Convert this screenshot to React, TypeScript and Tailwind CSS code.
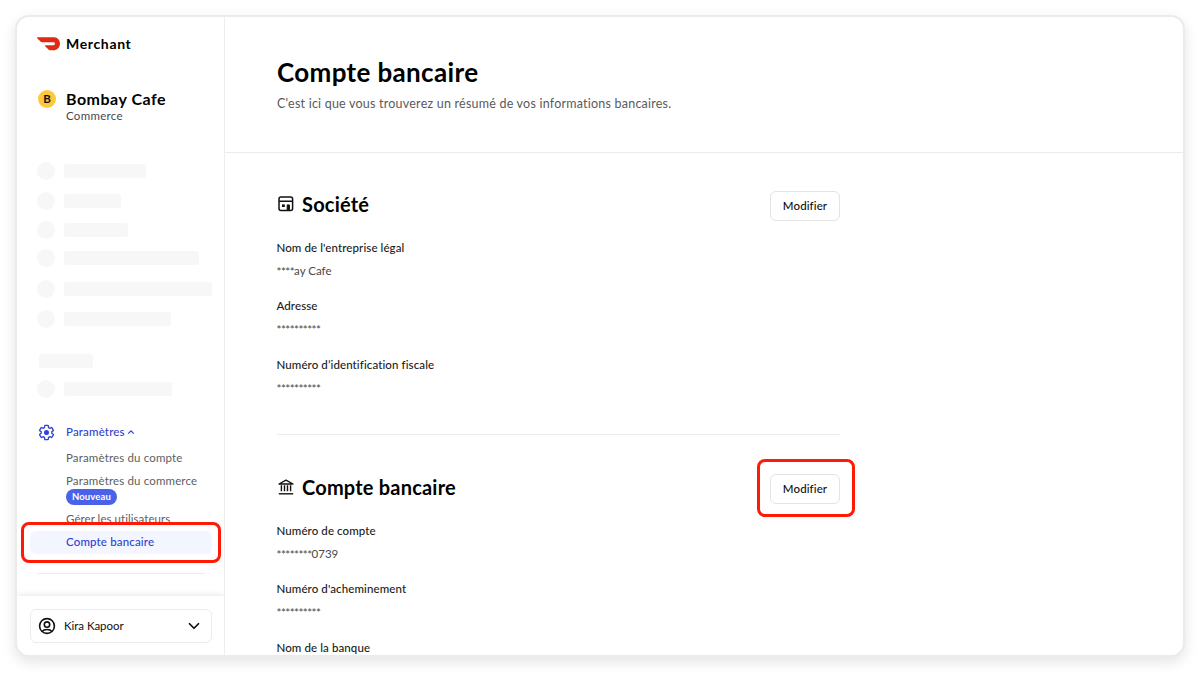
import { ChevronDown } from 'lucide-react';
import clsx from 'clsx';

const skeletonRows = [
  { width: 'w-[82px]', gap: 'mb-3' },
  { width: 'w-[57px]', gap: 'mb-[11px]' },
  { width: 'w-16', gap: 'mb-[10px]' },
  { width: 'w-[135px]', gap: 'mb-[13px]' },
  { width: 'w-[148px]', gap: 'mb-3' },
  { width: 'w-[107px]', gap: 'mb-0' },
];

interface Field {
  label: string;
  mask?: string;
  value?: string;
}

const companyFields: Field[] = [
  { label: "Nom de l'entreprise légal", mask: '****', value: 'ay Cafe' },
  { label: 'Adresse', mask: '**********' },
  { label: 'Numéro d’identification fiscale', mask: '**********' },
];

const bankFields: Field[] = [
  { label: 'Numéro de compte', mask: '********', value: '0739' },
  { label: "Numéro d'acheminement", mask: '**********' },
  { label: 'Nom de la banque' },
];

function DashLogo() {
  return (
    <svg viewBox="0 5 24 14" className="w-[23px] h-[13.4px]" fill="#e02a12">
      <path d="M23.071 8.409a6.09 6.09 0 0 0-5.396-3.228H.584A.589.589 0 0 0 .17 6.184L3.894 9.93a1.752 1.752 0 0 0 1.242.516h12.049a1.554 1.554 0 1 1 .031 3.108H8.91a.589.589 0 0 0-.415 1.003l3.725 3.747a1.75 1.75 0 0 0 1.242.516h3.757c4.887 0 8.584-5.225 5.852-10.413" />
    </svg>
  );
}

function GearIcon() {
  return (
    <svg viewBox="0 0 24 24" className="w-[17px] h-[17px]" fill="none" stroke="currentColor" strokeWidth="1.9" strokeLinejoin="round">
      <path d="M19.43 12.98c.04-.32.07-.64.07-.98 0-.34-.03-.66-.07-.98l2.11-1.65c.19-.15.24-.42.12-.64l-2-3.46a.5.5 0 0 0-.61-.22l-2.49 1c-.52-.4-1.08-.73-1.69-.98l-.38-2.65A.488.488 0 0 0 14 2h-4c-.25 0-.46.18-.49.42l-.38 2.65c-.61.25-1.17.59-1.69.98l-2.49-1a.5.5 0 0 0-.61.22l-2 3.46c-.13.22-.07.49.12.64l2.11 1.65c-.04.32-.07.65-.07.98 0 .33.03.66.07.98l-2.11 1.65c-.19.15-.24.42-.12.64l2 3.46a.5.5 0 0 0 .61.22l2.49-1c.52.4 1.08.73 1.69.98l.38 2.65c.03.24.24.42.49.42h4c.25 0 .46-.18.49-.42l.38-2.65c.61-.25 1.17-.59 1.69-.98l2.49 1a.5.5 0 0 0 .61-.22l2-3.46c.12-.22.07-.49-.12-.64z" />
      <circle cx="12" cy="12" r="2.6" fill="currentColor" />
    </svg>
  );
}

function StoreIcon() {
  return (
    <svg viewBox="0 0 16 16" className="w-4 h-4 ml-[1px]" fill="none" stroke="#111" strokeWidth="1.5">
      <rect x="1" y="1" width="13.6" height="13.6" rx="2" />
      <path d="M1 5.2h13.6" />
      <path d="M9.2 14.5V8.9h2.2v5.6z" fill="#111" strokeWidth="1" />
      <rect x="4" y="8.4" width="2.8" height="2.6" fill="#111" stroke="none" />
    </svg>
  );
}

function BankIcon() {
  return (
    <svg viewBox="0 0 16 16" className="w-4 h-4 ml-[1px]" fill="none" stroke="#111" strokeWidth="1.4">
      <path d="M1 5 8 1.2 15 5z" strokeLinejoin="round" />
      <path d="M3.4 6.3v6M6.5 6.3v6M9.5 6.3v6M12.6 6.3v6" />
      <path d="M.8 14.8h14.4" />
    </svg>
  );
}

function UserIcon() {
  return (
    <svg viewBox="0 0 18 18" className="w-[18px] h-[18px]" fill="none" stroke="#111" strokeWidth="1.6">
      <circle cx="9" cy="9" r="7.4" />
      <circle cx="9" cy="7.6" r="2.7" />
      <path d="M4.2 14.4c1-1.4 2.7-1.9 4.8-1.9s3.8.5 4.8 1.9" />
    </svg>
  );
}

function EditButton({ highlighted }: { highlighted?: boolean }) {
  return (
    <div className="relative">
      <button className="block w-[70px] h-[30px] rounded-md border border-[#e3e3e3] bg-white text-[11.5px] font-medium tracking-[0.1px] text-[#111]">
        Modifier
      </button>
      {highlighted && (
        <div className="absolute -left-[13px] -top-[15px] w-[98px] h-[58px] rounded-lg border-[3px] border-[#ff1a05] pointer-events-none" />
      )}
    </div>
  );
}

function FieldList({ fields }: { fields: Field[] }) {
  return (
    <dl className="mt-[19px] -ml-[0.5px] flex flex-col gap-[19px] text-[11.5px]">
      {fields.map((field) => (
        <div key={field.label} className="h-[39.4px]">
          <dt className="h-4 leading-4 font-medium tracking-[0.1px] text-[#1b1b1b]">{field.label}</dt>
          <dd className="flex mt-[7px] h-4 leading-4 text-[#494949]">
            <span className="pt-[1px] tracking-[-0.5px]">{field.mask}</span>
            <span>{field.value}</span>
          </dd>
        </div>
      ))}
    </dl>
  );
}

function SkeletonRow({ width, gap }: { width: string; gap?: string }) {
  return (
    <div className={clsx('flex items-center h-[18px]', gap)}>
      <div className="w-[18px] h-[18px] rounded-full bg-[#f7f7f7]" />
      <div className={clsx('ml-[9px] h-[14px] rounded-[2px] bg-[#f7f7f7]', width)} />
    </div>
  );
}

function Sidebar() {
  return (
    <aside className="flex flex-col w-[208px] shrink-0 border-r border-[#ededed]">
      <div className="flex-1 min-h-0 overflow-hidden">
        <div className="flex items-center h-5 mt-[17px] pl-5 gap-[6px]">
          <DashLogo />
          <span className="-mt-[1px] text-[14px] font-bold tracking-[0.65px] text-black">Merchant</span>
        </div>

        <div className="flex mt-[35px] pl-[21px] gap-[10px]">
          <div className="flex items-center justify-center w-[18px] h-[18px] mt-[1px] rounded-full bg-[#ffc83a] text-[11.5px] font-bold">B</div>
          <div>
            <div className="h-5 leading-[19px] text-[16px] font-bold tracking-[0.5px] text-black">Bombay Cafe</div>
            <div className="h-[14px] leading-[14px] text-[11.5px] tracking-[0.3px] text-[#494949]">Commerce</div>
          </div>
        </div>

        {/* Loading placeholders */}
        <div className="mt-[39px] pl-5">
          {skeletonRows.map((row) => (
            <SkeletonRow key={row.width} width={row.width} gap={row.gap} />
          ))}
          <div className="mt-[26px] ml-[2px] w-[54px] h-[14px] rounded-[2px] bg-[#f7f7f7]" />
          <div className="mt-3">
            <SkeletonRow width="w-[108px]" />
          </div>
        </div>

        {/* Settings group */}
        <nav className="mt-6 text-[11.5px] tracking-[0.15px] text-[#606060]">
          <div className="flex items-center h-5 pl-[21px] text-[#2f43d4] font-medium">
            <GearIcon />
            <span className="ml-[11px]">Paramètres</span>
            <svg viewBox="0 0 8 6" className="ml-[2px] w-2 h-[6px]" fill="none" stroke="currentColor" strokeWidth="1.2">
              <path d="M1.2 4.6 4 1.8l2.8 2.8" />
            </svg>
          </div>
          <div className="pl-[49px]">
            <div className="mt-[6px] h-5 leading-5">Paramètres du compte</div>
            <div className="mt-[5px] h-4 leading-4">Paramètres du commerce</div>
            <div className="flex items-center justify-center w-[51px] h-4 rounded-full bg-[#4a62ea] text-[9.5px] font-bold text-white">
              Nouveau
            </div>
            <div className="mt-[6px] h-4 leading-4 tracking-[0.05px]">Gérer les utilisateurs</div>
          </div>
          <div className="relative -mt-[5px] ml-1 w-[200px] h-[41px] rounded-lg border-[3px] border-[#ff1a05] bg-white pt-[6px] px-[6px]">
            <div className="h-[23px] leading-[22px] pl-[36px] rounded-md bg-[#f3f6fe] text-[#2f43d4] font-medium">
              Compte bancaire
            </div>
          </div>
          <div className="mt-[10px] ml-5 w-[168px] h-px bg-[#ebebeb]" />
        </nav>
      </div>

      <div className="h-[59px] px-[13px] pt-[13px] shadow-[0_-1px_6px_rgba(0,0,0,0.1)] [clip-path:inset(-12px_0_0_0)]">
        <div className="flex items-center w-[182px] h-[34px] pl-[7px] pr-2 rounded-md border border-[#ebebeb]">
          <UserIcon />
          <span className="ml-[8px] flex-1 text-[11.5px] tracking-[-0.05px]">Kira Kapoor</span>
          <ChevronDown className="w-[18px] h-[18px]" strokeWidth={2.3} />
        </div>
      </div>
    </aside>
  );
}

export default function App() {
  return (
    <div className="w-[1200px] h-[686px] p-[15px] overflow-hidden bg-white font-['Lato','Liberation_Sans',sans-serif] text-[#111]">
      <div className="flex w-[1170px] h-[642px] overflow-hidden rounded-[14px] border-2 border-[#ebebeb] bg-white shadow-[0_5px_14px_rgba(0,0,0,0.11)]">
        <Sidebar />

        <main className="flex-1 min-w-0">
          <header className="h-[136px] pl-[52px] pt-[39px] border-b border-[#ebebeb]">
            <h1 className="h-8 leading-[33px] text-[26px] font-bold tracking-[0.35px] text-black">Compte bancaire</h1>
            <p className="mt-2 h-4 leading-4 text-[12.5px] tracking-[0.22px] text-[#5a5a5a]">
              C'est ici que vous trouverez un résumé de vos informations bancaires.
            </p>
          </header>

          <div className="w-[563px] ml-[52px]">
            <section className="h-[282px] pt-[38px] border-b border-[#ebebeb]">
              <div className="flex items-center h-[30px]">
                <div className="flex flex-1 items-center -mt-[5px]">
                  <StoreIcon />
                  <h2 className="ml-2 text-[20px] font-bold tracking-[0.2px] text-black">Société</h2>
                </div>
                <EditButton />
              </div>
              <FieldList fields={companyFields} />
            </section>

            <section className="pt-[39px]">
              <div className="flex items-center h-[30px]">
                <div className="flex flex-1 items-center -mt-[5px]">
                  <BankIcon />
                  <h2 className="ml-2 text-[20px] font-bold tracking-[0.2px] text-black">Compte bancaire</h2>
                </div>
                <EditButton highlighted />
              </div>
              <FieldList fields={bankFields} />
            </section>
          </div>
        </main>
      </div>
    </div>
  );
}
